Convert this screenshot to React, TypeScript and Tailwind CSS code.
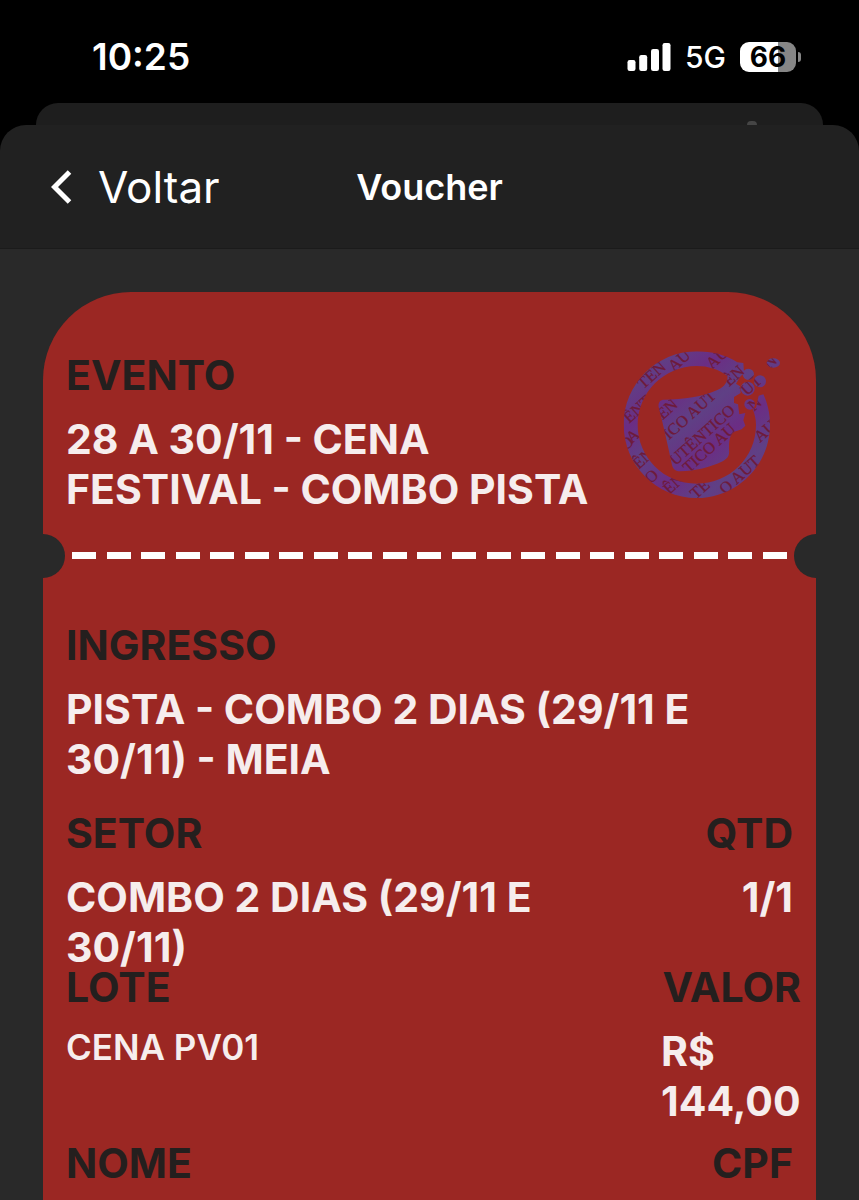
import React from "react";

const label = "text-[41px] leading-[50px] font-bold text-[#241f1e]";
const value = "text-[41px] leading-[50px] font-bold text-[#f6eded]";

function StatusBar() {
  return (
    <div className="flex h-[103px] items-start justify-between pt-9 pr-[58px] pl-[92px] text-white">
      <time className="text-[37px] leading-[42px] font-semibold">10:25</time>
      <div className="flex h-[42px] items-center gap-[14px]">
        <svg className="h-7 w-11" viewBox="0 0 44 28" fill="#fff" aria-label="Sinal">
          <rect x="0.5" y="17" width="8" height="11" rx="2.2" />
          <rect x="12.2" y="12" width="8" height="16" rx="2.2" />
          <rect x="24" y="6" width="8" height="22" rx="2.2" />
          <rect x="35.5" y="0" width="8" height="28" rx="2.2" />
        </svg>
        <span className="text-[30px] leading-[42px] font-medium">5G</span>
        <div className="flex items-center gap-[2px]">
          <div className="flex h-[30px] w-14 items-center justify-center rounded-[9px] bg-linear-to-r from-white from-67% to-[#868686] to-67% text-[28px] leading-[30px] font-bold text-black">
            66
          </div>
          <div className="h-[10px] w-[3px] rounded-r-full bg-[#868686]" />
        </div>
      </div>
    </div>
  );
}

type Fragment = [x: number, y: number, text: string];

const fragments: Fragment[] = [
  [188, 270, "EN"],
  [207, 330, "ICO AUT"],
  [226, 408, "UTÊNTICO"],
  [266, 430, "TICO AU"],
  [88, 280, "ÊNT"],
  [130, 178, "TÊN"],
  [222, 126, "AU"],
  [336, 118, "AU"],
  [388, 170, "ÊN"],
  [440, 198, "UT"],
  [462, 244, "N"],
  [480, 338, "AU"],
  [376, 494, "O AUT"],
  [288, 508, "TÊ"],
  [208, 494, "ÊN"],
  [152, 462, "O"],
  [116, 418, "ÊN"],
  [78, 362, "O"],
  [96, 340, "A"],
  [508, 118, "N"],
];

function Stamp() {
  return (
    <svg className="h-[153px] w-[167px] shrink-0" viewBox="60 50 501 459" aria-label="Autêntico">
      <defs>
        <linearGradient id="ink" x1="0" y1="0" x2="0.14" y2="0.16" spreadMethod="reflect">
          <stop offset="0" stopColor="#6b2d84" />
          <stop offset="1" stopColor="#5f4085" />
        </linearGradient>
        <clipPath id="stampShape">
          <path
            clipRule="evenodd"
            d="M430 98 L412 96 C375 73 335 63 290 63 C170 63 71 162 71 283 C71 404 170 503 290 503 C411 503 510 404 510 283 C510 250 503 219 490 192 L476 196 L468 232 L458 236 C464 251 468 267 468 284 C468 381 389 460 290 460 C192 460 113 381 113 284 C113 187 192 107 290 107 C325 107 355 117 382 136 C384 150 378 168 352 179 C310 199 250 207 192 208 C180 208 174 217 176 230 C189 280 203 342 216 404 C219 417 228 423 240 423 C286 422 330 411 368 393 C384 384 389 375 387 358 C386 325 392 305 410 302 L425 297 L436 286 L430 270 L436 248 L418 252 L414 222 L402 218 L402 200 L422 188 L420 168 L408 160 L420 140 L432 128 Z"
          />
          <circle cx="445" cy="132" r="17" />
          <circle cx="480" cy="153" r="18" />
          <circle cx="443" cy="175" r="21" />
          <circle cx="449" cy="222" r="16" />
          <ellipse cx="520" cy="98" rx="20" ry="14" />
        </clipPath>
      </defs>
      <g clipPath="url(#stampShape)">
        <rect x="60" y="50" width="501" height="459" fill="url(#ink)" />
        <g fill="#6e1a3a" stroke="#6e1a3a" strokeWidth="0.8" fontFamily="Liberation Serif, serif" fontSize="49">
          {fragments.map(([x, y, text]) => (
            <text key={`${x}-${y}`} transform={`translate(${x} ${y}) rotate(-42)`}>
              {text}
            </text>
          ))}
        </g>
      </g>
    </svg>
  );
}

function Perforation() {
  return (
    <div className="flex h-11 items-center justify-between overflow-hidden">
      <div className="-ml-[22px] size-11 shrink-0 rounded-full bg-[#292929]" />
      <div className="mx-[7px] mb-[2px] flex grow justify-between">
        {Array.from({ length: 21 }, (_, i) => (
          <span key={i} className="h-[7px] w-6 bg-white" />
        ))}
      </div>
      <div className="-mr-[22px] size-11 shrink-0 rounded-full bg-[#292929]" />
    </div>
  );
}

export default function App() {
  return (
    <div className="flex min-h-screen flex-col bg-black font-[Inter,sans-serif]">
      <StatusBar />
      <div className="mx-9 flex h-[22px] items-end justify-end overflow-hidden rounded-t-[22px] bg-[#1e1e1e] pr-[66px]">
        <div className="h-1 w-[10px] rounded-t-full bg-[#454545]" />
      </div>
      <header className="grid h-[124px] grid-cols-[1fr_auto_1fr] items-center rounded-t-[26px] border-b border-[#1b1b1b] bg-[#212121] text-white">
        <button className="flex items-center gap-[26px] justify-self-start pl-[51px] text-[44px] leading-[56px]">
          <svg className="h-[34px] w-[21px]" viewBox="0 0 21 34" fill="none" stroke="#fff" strokeWidth="5">
            <path d="M18.5 2 L3.5 17 L18.5 32" />
          </svg>
          Voltar
        </button>
        <h1 className="text-[36px] leading-[46px] font-semibold">Voucher</h1>
      </header>
      <main className="flex grow flex-col bg-[#292929] px-[43px] pt-[43px]">
        <article className="grow rounded-t-[88px] bg-[#9b2723]">
          <div className="flex items-start justify-between pt-[55px] pr-[29px] pl-[23px]">
            <div className="max-w-[530px] pt-[3px]">
              <h2 className={label}>EVENTO</h2>
              <p className={`mt-[14px] ${value}`}>28 A 30/11 - CENA FESTIVAL - COMBO PISTA</p>
            </div>
            <Stamp />
          </div>
          <div className="pt-5">
            <Perforation />
          </div>
          <div className="px-[23px] pt-[42px]">
            <h2 className={label}>INGRESSO</h2>
            <p className={`mt-[14px] ${value}`}>PISTA - COMBO 2 DIAS (29/11 E 30/11) - MEIA</p>
            <div className="mt-6 flex justify-between">
              <div className="max-w-[530px]">
                <h2 className={label}>SETOR</h2>
                <p className={`mt-[14px] ${value}`}>COMBO 2 DIAS (29/11 E 30/11)</p>
              </div>
              <div className="text-right">
                <h2 className={label}>QTD</h2>
                <p className={`mt-[14px] ${value}`}>1/1</p>
              </div>
            </div>
            <div className="-mt-[10px] -mr-2 flex justify-between">
              <div>
                <h2 className={label}>LOTE</h2>
                <p className="mt-[14px] text-[35px] leading-[42px] font-semibold text-[#f6eded]">CENA PV01</p>
              </div>
              <div className="w-[140px]">
                <h2 className={`text-right ${label}`}>VALOR</h2>
                <p className={`mt-[14px] ${value}`}>R$ 144,00</p>
              </div>
            </div>
            <div className="mt-3 flex justify-between">
              <h2 className={label}>NOME</h2>
              <h2 className={label}>CPF</h2>
            </div>
          </div>
        </article>
      </main>
    </div>
  );
}
